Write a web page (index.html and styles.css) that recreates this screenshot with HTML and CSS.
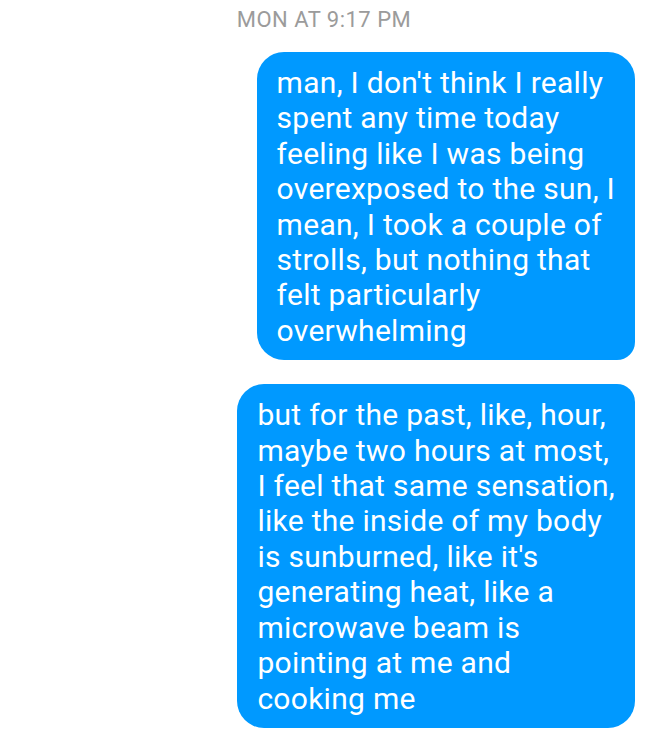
FILE: index.html
```html
<!DOCTYPE html>
<html>
<head>
<meta charset="utf-8">
<link rel="stylesheet" href="styles.css">
</head>
<body>
<div class="thread">
  <div class="stamp">MON AT 9:17 PM</div>
  <div class="group">
    <div class="bubble first">man, I don't think I really<br>spent any time today<br>feeling like I was being<br>overexposed to the sun, I<br>mean, I took a couple of<br>strolls, but nothing that<br>felt particularly<br>overwhelming</div>
    <div class="bubble last">but for the past, like, hour,<br>maybe two hours at most,<br>I feel that same sensation,<br>like the inside of my body<br>is sunburned, like it's<br>generating heat, like a<br>microwave beam is<br>pointing at me and<br>cooking me</div>
  </div>
</div>
</body>
</html>
```
FILE: styles.css
```css
html, body {
  margin: 0;
  padding: 0;
  background: #ffffff;
}
.thread {
  width: 648px;
  height: 744px;
  overflow: hidden;
  font-family: Roboto, "Noto Sans", sans-serif;
}
.stamp {
  text-align: center;
  color: #9b9b9b;
  font-size: 22px;
  letter-spacing: 0.5px;
  line-height: 24px;
  padding-top: 8px;
  height: 52px;
  box-sizing: border-box;
}
.group {
  display: flex;
  flex-direction: column;
  align-items: flex-end;
  gap: 24px;
  padding-right: 13px;
}
.bubble {
  background: #0099ff;
  color: #ffffff;
  font-size: 30px;
  letter-spacing: 0.28px;
  line-height: 35.4px;
  padding: 13px 20px 12px 20px;
  border-radius: 27px;
  white-space: nowrap;
}
.bubble.first {
  border-bottom-right-radius: 18px;
}
.bubble.last {
  border-top-right-radius: 18px;
}
```
